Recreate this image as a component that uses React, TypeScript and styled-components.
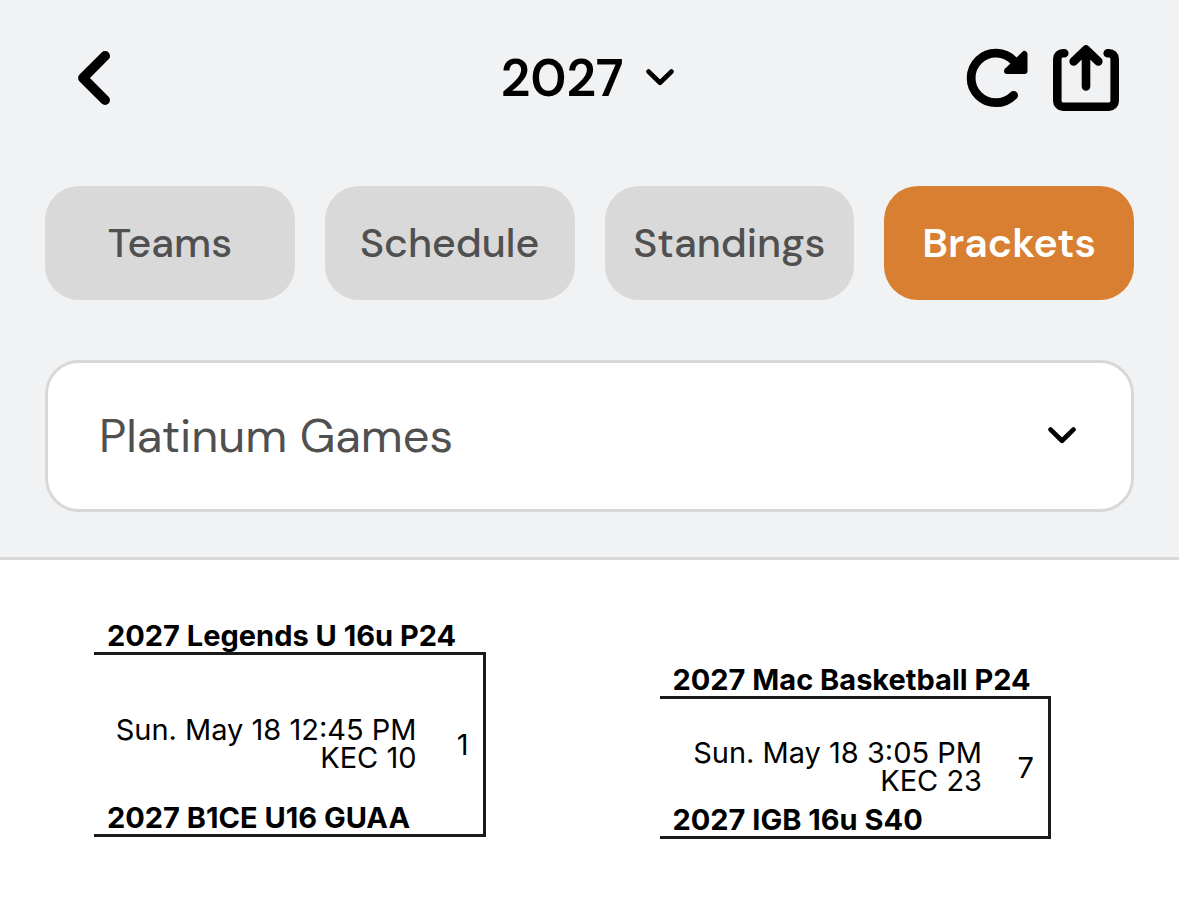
import React from "react";
import styled, { createGlobalStyle } from "styled-components";

const sans = `"DM Sans", Inter, "Liberation Sans", sans-serif`;

const GlobalStyle = createGlobalStyle`
  * { box-sizing: border-box; }
  body {
    margin: 0;
    background: #fff;
    color: #000;
    font-family: ${sans};
  }
  button, select { font-family: inherit; }
`;

const TopPanel = styled.header`
  display: flex;
  flex-direction: column;
  padding: 0 45px 45px;
  background: #f1f2f4;
  border-bottom: 3px solid #d8d8d8;
`;

const NavBar = styled.div`
  display: grid;
  grid-template-columns: 1fr auto 1fr;
  align-items: center;
  height: 156px;
  margin-bottom: 30px;
  padding: 0 15px 0 10px;
`;

const IconButton = styled.button`
  display: flex;
  padding: 0;
  border: 0;
  background: none;
  color: #000;
  cursor: pointer;
`;

const BackButton = styled(IconButton)`
  margin-left: 23px;
  justify-self: start;
`;

const Actions = styled.div`
  display: flex;
  justify-content: flex-end;
  gap: 23px;
`;

const Picker = styled.label`
  display: grid;
  align-items: center;

  > * { grid-area: 1 / 1; }
  > svg { justify-self: end; pointer-events: none; }
`;

const Select = styled.select`
  width: 100%;
  margin: 0;
  border: 0;
  background: none;
  appearance: none;
  cursor: pointer;
`;

const TitleSelect = styled(Select)`
  field-sizing: content;
  padding: 0 50px 0 0;
  color: #000;
  font-size: 52px;
  font-weight: 600;
  line-height: 60px;
`;

const Tabs = styled.nav`
  display: grid;
  grid-template-columns: repeat(4, 1fr);
  gap: 30px;
  margin-bottom: 60px;
`;

const Tab = styled.button<{ $active: boolean }>`
  height: 114px;
  padding: 0;
  border: 0;
  border-radius: 34px;
  background: ${(p) => (p.$active ? "#d97f32" : "#d9d9d9")};
  color: ${(p) => (p.$active ? "#fff" : "#505050")};
  font-size: 41px;
  font-weight: ${(p) => (p.$active ? 600 : 500)};
  cursor: pointer;
`;

const DivisionPicker = styled(Picker)`
  height: 152px;
  border: 3px solid #d8d8d8;
  border-radius: 34px;
  background: #fff;

  > svg { margin-right: 55px; }
`;

const DivisionSelect = styled(Select)`
  height: 100%;
  padding: 0 100px 0 51px;
  border-radius: 31px;
  color: #505050;
  font-size: 47px;
  font-weight: 400;
`;

const Bracket = styled.main`
  display: grid;
  grid-template-columns: 1fr 1fr;
  align-items: start;
  gap: 174px;
  padding: 59px 128px 60px 94px;
  font-family: Inter, "Liberation Sans", sans-serif;
  font-size: 29px;
  line-height: 28px;
`;

const Round = styled.section<{ $drop: number }>`
  padding-top: ${(p) => p.$drop}px;
`;

const Team = styled.div`
  height: 33px;
  padding-left: 13px;
  font-weight: 700;
  line-height: 34px;
  white-space: nowrap;
`;

const Matchup = styled.div<{ $span: number }>`
  display: flex;
  flex-direction: column;
  min-height: ${(p) => p.$span}px;
  padding-top: 33px;
  border: 3px solid #1a1a1a;
  border-left: 0;
`;

const GameInfo = styled.div`
  display: flex;
  flex: 1;
  align-items: center;
  justify-content: flex-end;
  padding-right: 14px;
`;

const When = styled.div`
  padding-bottom: 2px;
  text-align: right;
  white-space: nowrap;
`;

const GameNumber = styled.div`
  width: 52px;
  text-align: right;
`;

const Chevron = () => (
  <svg width="28" height="18" viewBox="0 0 28 18" fill="none" stroke="currentColor" strokeWidth="4.8" strokeLinecap="round" strokeLinejoin="round" aria-hidden="true">
    <path d="M2.6 2.6 14 13.8 25.4 2.6" />
  </svg>
);

const BackIcon = () => (
  <svg width="32" height="54" viewBox="0 0 32 54" fill="none" stroke="currentColor" strokeWidth="9.8" strokeLinecap="round" strokeLinejoin="round" aria-hidden="true">
    <path d="M27.1 4.9 5 27 27.1 49.1" />
  </svg>
);

const RefreshIcon = () => (
  <svg width="64" height="66" viewBox="0 1 64 66" fill="none" stroke="currentColor" strokeLinecap="round" strokeLinejoin="round" aria-hidden="true">
    <path d="M47.6 51.3A24.8 24.8 0 1 1 48 16.9" strokeWidth="8.8" />
    <path d="M58.5 10V27H41Z" strokeWidth="6" fill="currentColor" />
  </svg>
);

const ShareIcon = () => (
  <svg width="66" height="66" viewBox="0 0 66 66" fill="none" stroke="currentColor" strokeWidth="8.6" strokeLinecap="round" strokeLinejoin="round" aria-hidden="true">
    <path d="M11.3 8.2H10a5.7 5.7 0 0 0-5.7 5.7V56a5.7 5.7 0 0 0 5.7 5.7H56a5.7 5.7 0 0 0 5.7-5.7V13.9a5.7 5.7 0 0 0-5.7-5.7H54.7" />
    <path d="M33 41.5V4.5M20.7 16.4 33 4.5 45.3 16.4" />
  </svg>
);

const tabs = ["Teams", "Schedule", "Standings", "Brackets"];

const games = [
  { number: 1, top: "2027 Legends U 16u P24", bottom: "2027 B1CE U16 GUAA", time: "Sun. May 18 12:45 PM", court: "KEC 10", drop: 0, span: 185 },
  { number: 7, top: "2027 Mac Basketball P24", bottom: "2027 IGB 16u S40", time: "Sun. May 18 3:05 PM", court: "KEC 23", drop: 44, span: 143 },
];

export default function App() {
  return (
    <>
      <GlobalStyle />
      <TopPanel>
        <NavBar>
          <BackButton aria-label="Back"><BackIcon /></BackButton>
          <Picker>
            <TitleSelect aria-label="Class year">
              <option>2027</option>
            </TitleSelect>
            <Chevron />
          </Picker>
          <Actions>
            <IconButton aria-label="Refresh"><RefreshIcon /></IconButton>
            <IconButton aria-label="Share"><ShareIcon /></IconButton>
          </Actions>
        </NavBar>
        <Tabs>
          {tabs.map((name) => (
            <Tab key={name} $active={name === "Brackets"}>{name}</Tab>
          ))}
        </Tabs>
        <DivisionPicker>
          <DivisionSelect aria-label="Division">
            <option>Platinum Games</option>
          </DivisionSelect>
          <Chevron />
        </DivisionPicker>
      </TopPanel>
      <Bracket>
        {games.map((g) => (
          <Round key={g.number} $drop={g.drop}>
            <Team>{g.top}</Team>
            <Matchup $span={g.span}>
              <GameInfo>
                <When>
                  <div>{g.time}</div>
                  <div>{g.court}</div>
                </When>
                <GameNumber>{g.number}</GameNumber>
              </GameInfo>
              <Team>{g.bottom}</Team>
            </Matchup>
          </Round>
        ))}
      </Bracket>
    </>
  );
}
